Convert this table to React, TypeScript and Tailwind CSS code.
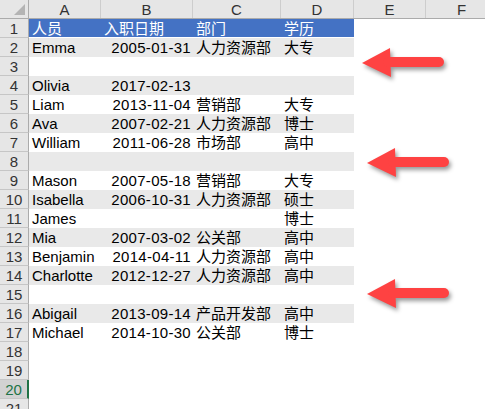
import React from "react";

const FONT = { fontFamily: '"Liberation Sans", "Noto Sans CJK SC", sans-serif' };

type Row = [string, string, string, string] | null;

const DATA: Row[] = [
  ["Emma", "2005-01-31", "人力资源部", "大专"],
  null,
  ["Olivia", "2017-02-13", "", ""],
  ["Liam", "2013-11-04", "营销部", "大专"],
  ["Ava", "2007-02-21", "人力资源部", "博士"],
  ["William", "2011-06-28", "市场部", "高中"],
  null,
  ["Mason", "2007-05-18", "营销部", "大专"],
  ["Isabella", "2006-10-31", "人力资源部", "硕士"],
  ["James", "", "", "博士"],
  ["Mia", "2007-03-02", "公关部", "高中"],
  ["Benjamin", "2014-04-11", "人力资源部", "高中"],
  ["Charlotte", "2012-12-27", "人力资源部", "高中"],
  null,
  ["Abigail", "2013-09-14", "产品开发部", "高中"],
  ["Michael", "2014-10-30", "公关部", "博士"],
];

function RowLabel({ n, active }: { n: number; active?: boolean }) {
  return (
    <div
      className={
        active
          ? "w-[29px] h-[19px] shrink-0 flex items-center justify-center bg-[#d2d2d2] text-[#217346] border-b border-[#c6c6c6] border-r-2 border-r-[#217346]"
          : "w-[29px] h-[19px] shrink-0 flex items-center justify-center bg-[#e6e6e6] text-[#333] border-b border-[#c6c6c6] border-r border-r-[#ababab]"
      }
    >
      {n}
    </div>
  );
}

function Arrow({ className }: { className: string }) {
  return (
    <svg
      width="92"
      height="38"
      viewBox="0 0 92 38"
      className={"absolute drop-shadow-[2px_3px_2px_rgba(0,0,0,0.4)] " + className}
    >
      <polygon points="2,18 30,3 31,32" fill="#fe4242" />
      <line x1="28" y1="17" x2="79" y2="17" stroke="#fe4242" strokeWidth="10" strokeLinecap="round" />
    </svg>
  );
}

export default function App() {
  return (
    <div className="relative w-[485px] h-[409px] overflow-hidden bg-white text-[15px] leading-none text-black" style={FONT}>
      {/* column headers */}
      <div className="flex h-[19px] bg-[#e6e6e6] border-b border-[#ababab] text-[#333]">
        <div className="w-[29px] shrink-0 relative border-r border-[#ababab]">
          <svg width="29" height="18" className="absolute left-0 top-0">
            <polygon points="14,15 25,4 25,15" fill="#b4b4b4" />
          </svg>
        </div>
        <div className="w-[72px] shrink-0 flex items-center justify-center border-r border-[#cdcdcd]">A</div>
        <div className="w-[92px] shrink-0 flex items-center justify-center border-r border-[#cdcdcd]">B</div>
        <div className="w-[88px] shrink-0 flex items-center justify-center border-r border-[#cdcdcd]">C</div>
        <div className="w-[73px] shrink-0 flex items-center justify-center border-r border-[#cdcdcd]">D</div>
        <div className="w-[72px] shrink-0 flex items-center justify-center border-r border-[#cdcdcd]">E</div>
        <div className="w-[72px] shrink-0 flex items-center justify-center border-r border-[#cdcdcd]">F</div>
      </div>

      {/* header row */}
      <div className="flex h-[19px]">
        <RowLabel n={1} />
        <div className="w-[325px] h-[18px] flex items-center bg-[#4472c4] text-white">
          <div className="w-[72px] shrink-0 pl-[3px]">人员</div>
          <div className="w-[92px] shrink-0 pl-[3px]">入职日期</div>
          <div className="w-[88px] shrink-0 pl-[3px]">部门</div>
          <div className="w-[73px] shrink-0 pl-[3px]">学历</div>
        </div>
      </div>

      {DATA.map((r, i) => {
        const n = i + 2;
        const band = n % 2 === 0 ? "bg-[#e9e9e9]" : "bg-white";
        return (
          <div key={n} className="flex h-[19px]">
            <RowLabel n={n} />
            <div className={"w-[325px] h-[19px] flex items-center " + band}>
              <div className="w-[72px] shrink-0 pl-[3px]">{r?.[0]}</div>
              <div className="w-[92px] shrink-0 pr-[2px] text-right tracking-[0.3px]">{r?.[1]}</div>
              <div className="w-[88px] shrink-0 pl-[3px]">{r?.[2]}</div>
              <div className="w-[73px] shrink-0 pl-[3px]">{r?.[3]}</div>
            </div>
          </div>
        );
      })}

      {[18, 19, 20, 21].map((n) => (
        <div key={n} className="flex h-[19px]">
          <RowLabel n={n} active={n === 20} />
        </div>
      ))}

      <Arrow className="left-[360px] top-[45px]" />
      <Arrow className="left-[365px] top-[145px]" />
      <Arrow className="left-[365px] top-[276px]" />
    </div>
  );
}
